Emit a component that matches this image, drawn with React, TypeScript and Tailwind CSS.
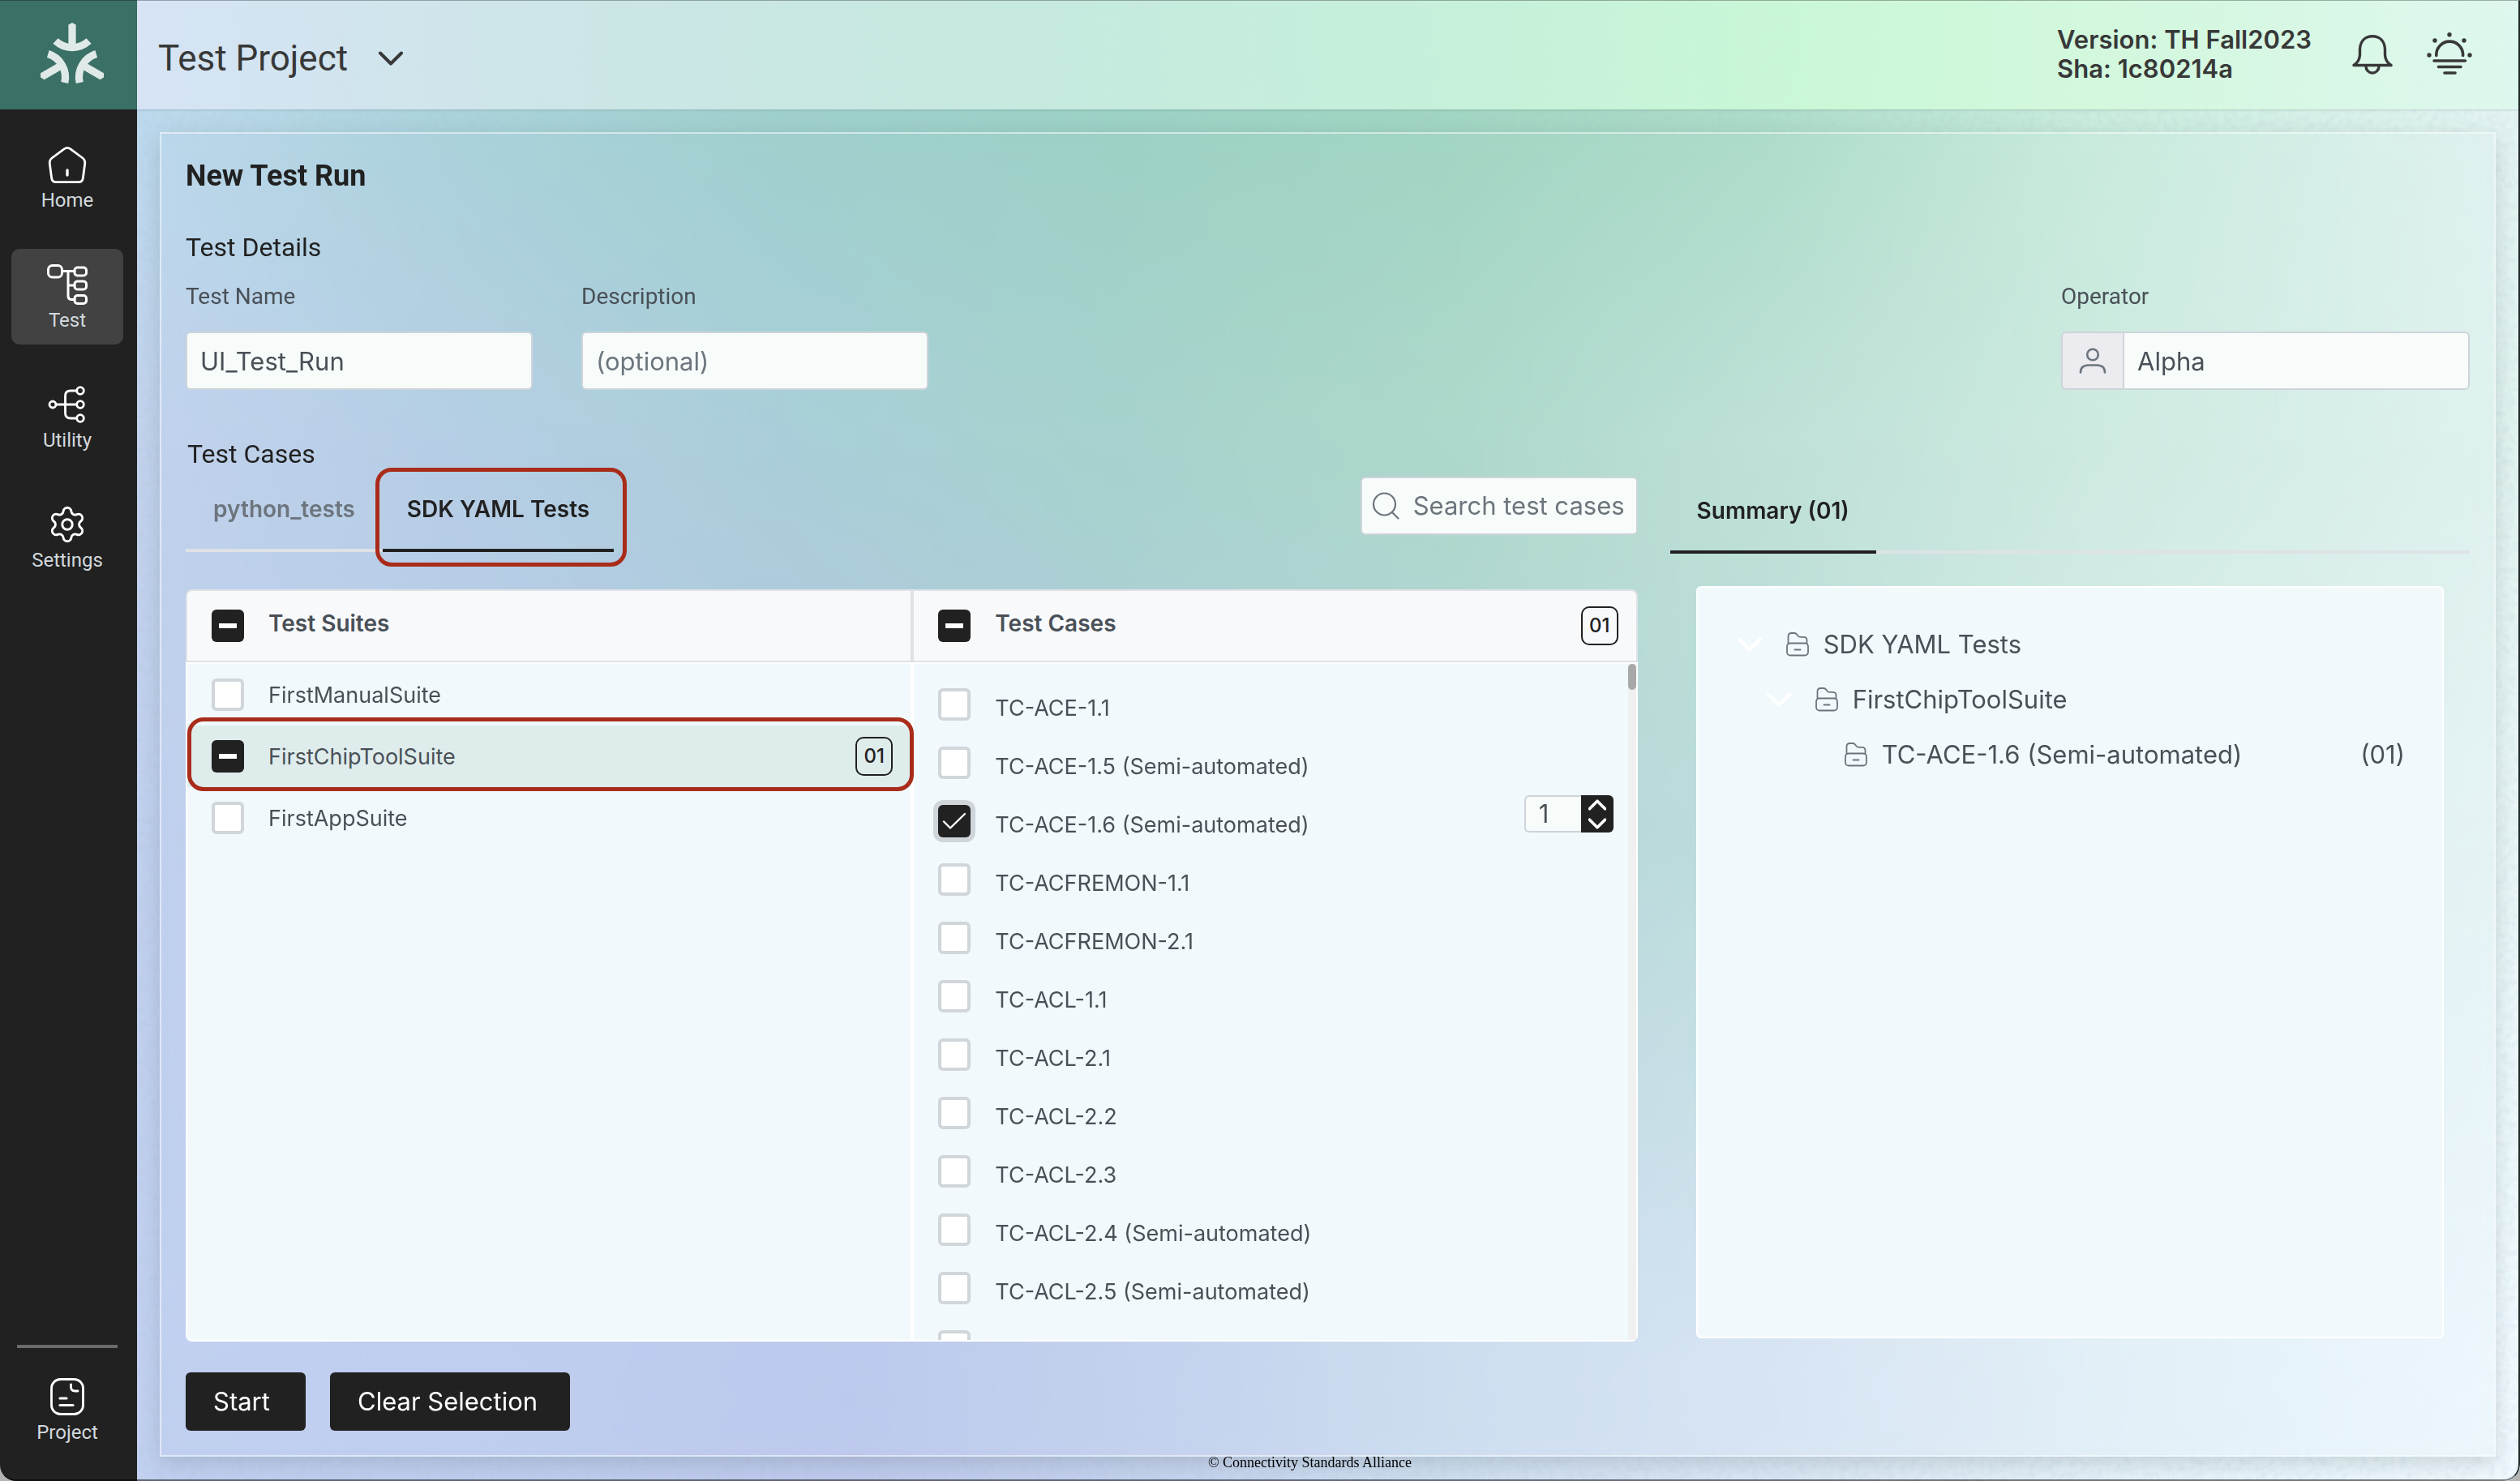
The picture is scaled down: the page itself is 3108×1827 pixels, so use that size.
import type { ReactNode } from "react";
import { Settings } from "lucide-react";

/* ---------- background ---------- */

// One horizontal colour ramp per height; each fades into the one below it.
const ramps = [
  "bg-[linear-gradient(to_right,#bcdbee_0%,#a9d4da_13%,#9dd1cb_27%,#9ad2c4_41%,#9fd6c1_55%,#aadcc6_68%,#c8eddc_82%,#e4f4f4_100%)]",
  "bg-[linear-gradient(to_right,#c3d3ee_0%,#b6cfe6_13%,#aacfda_27%,#a7d3cd_41%,#aed9cb_55%,#bfe2d8_68%,#cfece1_82%,#e2f4f1_100%)] [mask-image:linear-gradient(to_bottom,transparent_4%,black_30%)]",
  "bg-[linear-gradient(to_right,#c1d1ef_0%,#bccdea_13%,#b4c8e2_27%,#b2cfdd_41%,#b4d6d8_55%,#bddfdc_68%,#d8eeec_82%,#e9f6f7_100%)] [mask-image:linear-gradient(to_bottom,transparent_30%,black_55%)]",
  "bg-[linear-gradient(to_right,#c2d1f1_0%,#c0cef0_13%,#becaee_30%,#c6d4ef_44%,#cfdff1_55%,#d9e6f5_68%,#e4f1f9_82%,#f0faff_100%)] [mask-image:linear-gradient(to_bottom,transparent_55%,black_92%)]",
];

function Backdrop() {
  return (
    <div aria-hidden="true" className="pointer-events-none absolute inset-0">
      {ramps.map((ramp) => (
        <div key={ramp} className={`absolute inset-0 ${ramp}`} />
      ))}
      <svg className="absolute inset-0 h-full w-full opacity-20">
        <filter id="grain">
          <feTurbulence type="fractalNoise" baseFrequency="0.12" numOctaves="3" />
          <feColorMatrix values="0 0 0 0 0.4  0 0 0 0 0.5  0 0 0 0 0.6  1.6 0 0 0 -0.6" />
        </filter>
        <rect width="100%" height="100%" filter="url(#grain)" />
      </svg>
    </div>
  );
}

/* ---------- icons ---------- */

const line = {
  fill: "none",
  stroke: "currentColor",
  strokeLinecap: "round" as const,
  strokeLinejoin: "round" as const,
  "aria-hidden": true,
};

function LogoArm({ angle }: { angle: number }) {
  return (
    <g transform={`rotate(${angle} 40 45)`}>
      <path d="M35.4 2.6L40 0l4.600 2.600V30h-9.200z" fill="currentColor" />
      <path d="M19.500 22.500A30 30 0 0 0 60.500 22.500" fill="none" stroke="currentColor" strokeWidth="9.200" />
    </g>
  );
}

function Logo() {
  return (
    <svg viewBox="0 0 80 80" className="size-20 text-[#dfe9e8]" role="img" aria-label="Matter">
      <LogoArm angle={0} />
      <LogoArm angle={120} />
      <LogoArm angle={240} />
    </svg>
  );
}

function HomeIcon() {
  return (
    <svg {...line} viewBox="0 0 50 50" className="size-[50px]" strokeWidth="2.8">
      <path d="M21 5.800Q25 3 29 5.800L44 17Q47.200 19.500 46.700 24L44.300 42Q43.600 46.600 39 46.600H11Q6.400 46.600 5.700 42L3.300 24Q2.800 19.500 6 17Z" />
      <path d="M25 32v6" strokeWidth="3.400" />
    </svg>
  );
}

function TestIcon() {
  return (
    <svg {...line} viewBox="0 0 50 50" className="size-[50px]" strokeWidth="3">
      <rect x="1.500" y="1.500" width="17" height="14.500" rx="5" />
      <rect x="34" y="4" width="14.500" height="10" rx="3.500" />
      <rect x="34" y="21" width="14.500" height="10" rx="3.500" />
      <rect x="34" y="38.500" width="14.500" height="10" rx="3.500" />
      <path d="M19 8.500H34M26 8.500V39q0 4.500 4.500 4.500H34M26 26H34" />
    </svg>
  );
}

function UtilityIcon() {
  return (
    <svg {...line} viewBox="0 0 50 50" className="size-[50px]" strokeWidth="2.800">
      <circle cx="7" cy="25" r="4" />
      <circle cx="41" cy="8" r="4.300" />
      <circle cx="41" cy="25" r="4.300" />
      <circle cx="41" cy="42" r="4.300" />
      <path d="M11 25H36.500M36.500 8H29q-6.500 0-6.500 6.500v21q0 6.500 6.500 6.500h7.500" />
    </svg>
  );
}

function ProjectIcon() {
  return (
    <svg {...line} viewBox="0 0 50 50" className="size-[50px]" strokeWidth="2.800">
      <rect x="5.500" y="3.500" width="39" height="43" rx="11" />
      <path d="M29.500 10v3q0 5 5 5h3.500" />
      <path d="M16 27h8M16 35.500h16" strokeWidth="3.200" />
    </svg>
  );
}

function BellIcon() {
  return (
    <svg {...line} viewBox="0 0 50 50" className="size-[50px]" strokeWidth="3.400">
      <path d="M2 38.500Q9 34 9.500 26V19C10 8.500 16 2.800 25 2.800S40 8.500 40.500 19v7Q41 34 48 38.500Z" />
      <path d="M17 40a8 8 0 0 0 16 0" />
    </svg>
  );
}

function SunIcon() {
  const dots = [[3, 29], [10, 11], [28, 3.700], [46, 11], [53, 29]];
  return (
    <svg {...line} viewBox="0 0 56 56" className="size-14" strokeWidth="3.600">
      {dots.map(([x, y]) => (
        <circle key={x} cx={x} cy={y} r="2.700" fill="currentColor" stroke="none" />
      ))}
      <path d="M11.800 29.500V28.500a16.400 16.400 0 0 1 32.800 0V29.500" />
      <path d="M9 36H47.500M14.500 43.500H42M22 51H35" />
    </svg>
  );
}

function Chevron({ className }: { className: string }) {
  return (
    <svg {...line} viewBox="0 0 30 18" className={className}>
      <path d="M2 2.500L15 15.500 28 2.500" />
    </svg>
  );
}

function FolderIcon() {
  return (
    <svg {...line} viewBox="0 0 28 30" className="h-[30px] w-7 shrink-0 text-[#6c757d]" strokeWidth="1.800">
      <rect x="1" y="13.500" width="26" height="15" rx="4" />
      <path d="M2.500 13.500V5q0-4 4-4h3.500q2 0 3.500 2l1 1.500q1 1.300 3 1.300h4q4 0 4 4v3.700" />
      <path d="M10.500 21.500h7" />
    </svg>
  );
}

function UserIcon() {
  return (
    <svg {...line} viewBox="0 0 34 34" className="size-[34px] text-[#6c757d]" strokeWidth="2.600">
      <circle cx="17" cy="9.500" r="6.800" />
      <path d="M2 31.500q0-9 10-9h10q10 0 10 9" />
    </svg>
  );
}

function SearchIcon() {
  return (
    <svg {...line} viewBox="0 0 34 34" className="size-[34px] shrink-0 text-[#6c757d]" strokeWidth="2.200">
      <circle cx="15.500" cy="15" r="13.500" />
      <path d="M25 25l7.500 7.500" />
    </svg>
  );
}

/* ---------- controls ---------- */

type Tick = "off" | "on" | "mixed";

function TickBox({ id, state, focused, label }: { id: string; state: Tick; focused?: boolean; label?: string }) {
  const filled = state !== "off";
  return (
    <span className="grid size-10 shrink-0 place-items-center">
      <input
        id={id}
        type="checkbox"
        aria-label={label}
        defaultChecked={filled}
        className={`col-start-1 row-start-1 size-10 appearance-none rounded-md ${
          filled ? "bg-[#212121]" : "border-4 border-[#d0d6d9] bg-white"
        } ${focused ? "ring-[6px] ring-[#cfd5d9]" : ""}`}
      />
      {state === "mixed" && (
        <span className="pointer-events-none col-start-1 row-start-1 h-[6px] w-[22px] bg-white" />
      )}
      {state === "on" && (
        <svg
          {...line}
          viewBox="0 0 30 22"
          strokeWidth="2.400"
          className="pointer-events-none col-start-1 row-start-1 h-[22px] w-[30px] text-white"
        >
          <path d="M2 11.500l8 8L28 2" />
        </svg>
      )}
    </span>
  );
}

function CountBadge({ children }: { children: ReactNode }) {
  return (
    <span className="ml-auto grid h-12 w-[46px] shrink-0 place-items-center rounded-[10px] border-2 border-[#212121] text-2xl font-medium text-[#212121]">
      {children}
    </span>
  );
}

const field =
  "h-[72px] rounded-md border-2 border-[#ced4da] bg-[#f7fbfa] px-4 text-[31px] text-[#495057] placeholder:text-[#6c757d]";

function NavItem({ label, active, children }: { label: string; active?: boolean; children: ReactNode }) {
  return (
    <a
      href={`#${label.toLowerCase()}`}
      aria-current={active ? "page" : undefined}
      className={`flex h-[118px] w-[138px] flex-col items-center rounded-[10px] pt-[19px] text-white ${
        active ? "bg-[#424242]" : ""
      }`}
    >
      {children}
      <span className="mt-[5px] font-[Roboto,sans-serif] text-2xl leading-7 text-[#d3d9dd]">{label}</span>
    </a>
  );
}

/* ---------- data ---------- */

const suites: { name: string; state: Tick; count?: string }[] = [
  { name: "FirstManualSuite", state: "off" },
  { name: "FirstChipToolSuite", state: "mixed", count: "01" },
  { name: "FirstAppSuite", state: "off" },
];

const cases = [
  "TC-ACE-1.1",
  "TC-ACE-1.5 (Semi-automated)",
  "TC-ACE-1.6 (Semi-automated)",
  "TC-ACFREMON-1.1",
  "TC-ACFREMON-2.1",
  "TC-ACL-1.1",
  "TC-ACL-2.1",
  "TC-ACL-2.2",
  "TC-ACL-2.3",
  "TC-ACL-2.4 (Semi-automated)",
  "TC-ACL-2.5 (Semi-automated)",
];
const selectedCase = "TC-ACE-1.6 (Semi-automated)";

/* ---------- sections ---------- */

function Sidebar() {
  return (
    <aside className="flex w-[169px] shrink-0 flex-col bg-[#212121]">
      <div className="flex h-[135px] shrink-0 items-start bg-[#3a7066] pt-7 pl-[49px]">
        <Logo />
      </div>
      <nav aria-label="Main" className="flex flex-1 flex-col gap-[30px] pt-6 pb-[30px] pl-3.5">
        <NavItem label="Home"><HomeIcon /></NavItem>
        <NavItem label="Test" active><TestIcon /></NavItem>
        <NavItem label="Utility"><UtilityIcon /></NavItem>
        <NavItem label="Settings"><Settings size={50} strokeWidth={1.4} aria-hidden="true" /></NavItem>
        <div className="mt-auto flex flex-col gap-4">
          <hr className="ml-[7px] w-[124px] border-t-4 border-[#6b6b6b]" />
          <NavItem label="Project"><ProjectIcon /></NavItem>
        </div>
      </nav>
    </aside>
  );
}

function TopBar() {
  return (
    <header className="relative flex h-[135px] shrink-0 items-center bg-[linear-gradient(to_right,#d9e5f6e6_0%,#d0e8e8e6_20%,#caece2e6_38%,#caf3dde6_55%,#cdfad8e6_70%,#d5f9dfe6_85%,#def8eee6_100%)] pr-[59px] pb-0.5 pl-[26px] text-[#383838] shadow-sm">
      <button type="button" className="flex items-center gap-[38px] pt-2.5 font-[Roboto,sans-serif] text-[44px] leading-[52px]">
        Test Project
        <Chevron className="h-[18px] w-[30px] stroke-[4px]" />
      </button>
      <p className="ml-auto text-[31px] leading-9 font-semibold">
        Version: TH Fall2023
        <br />
        Sha: 1c80214a
      </p>
      <button type="button" aria-label="Notifications" className="ml-[50px]"><BellIcon /></button>
      <button type="button" aria-label="Theme" className="ml-[42px]"><SunIcon /></button>
    </header>
  );
}

function Details() {
  return (
    <section className="font-[Roboto,sans-serif]">
      <h2 className="mt-12 text-[32px] leading-[38px] text-[#212121]">Test Details</h2>
      <div className="mt-[26px] flex gap-[60px] text-[28px] leading-8 text-[#495057]">
        <div className="flex flex-col gap-[27px]">
          <label htmlFor="test-name">Test Name</label>
          <input id="test-name" defaultValue="UI_Test_Run" className={`w-[428px] font-[Inter,sans-serif] ${field}`} />
        </div>
        <div className="flex flex-col gap-[27px]">
          <label htmlFor="description">Description</label>
          <input id="description" placeholder="(optional)" className={`w-[428px] font-[Inter,sans-serif] ${field}`} />
        </div>
        <div className="ml-auto flex flex-col gap-[27px]">
          <label htmlFor="operator">Operator</label>
          <div className="flex">
            <span className="grid w-[76px] place-items-center rounded-l-md border-2 border-r-0 border-[#ced4da] bg-[#ebebf0]">
              <UserIcon />
            </span>
            <input
              id="operator"
              defaultValue="Alpha"
              className={`w-[428px] rounded-l-none font-[Inter,sans-serif] ${field}`}
            />
          </div>
        </div>
      </div>
    </section>
  );
}

function SuitePicker() {
  return (
    <div className="flex min-h-0 flex-col">
      <div className="flex h-[93px] shrink-0 items-start">
        <div role="tablist" aria-label="Test collections" className="flex text-[28px] leading-[34px] font-semibold">
          <button
            type="button"
            role="tab"
            aria-selected="false"
            className="w-[243px] border-b-4 border-[#dee2e6] pt-[23px] pb-8 text-[#6c757d]"
          >
            python_tests
          </button>
          <button
            type="button"
            role="tab"
            aria-selected="true"
            className="relative w-[285px] border-b-4 border-[#212121] pt-[23px] pb-8 text-[#212121]"
          >
            SDK YAML Tests
            <span className="pointer-events-none absolute -top-[11px] -right-4 -bottom-[22px] -left-[9px] rounded-[20px] border-5 border-[#a92c1a]" />
          </button>
        </div>
        <label className="ml-auto flex h-[72px] w-[342px] items-center gap-[17px] rounded-md border-2 border-[#ced4da] bg-[#f7fbfa] pl-3">
          <SearchIcon />
          <input
            type="text"
            aria-label="Search test cases"
            placeholder="Search test cases"
            className="w-full min-w-0 bg-transparent text-[31px] placeholder:text-[#6c757d]"
          />
        </label>
      </div>

      <div className="mt-[46px] flex min-h-0 flex-1 flex-col text-[#495057]">
        <div className="grid h-[90px] shrink-0 grid-cols-[896fr_890fr] rounded-t-[8px] border-2 border-[#dee2e6] bg-[#f8f9fb] text-[28px] leading-[34px] font-semibold">
          <div className="flex items-start gap-[30px] border-r-4 border-[#dee2e6] pt-[23px] pl-[30px]">
            <TickBox id="all-suites" state="mixed" />
            <label htmlFor="all-suites">Test Suites</label>
          </div>
          <div className="flex items-start gap-[30px] pt-[23px] pr-[22px] pl-[30px]">
            <TickBox id="all-cases" state="mixed" />
            <label htmlFor="all-cases">Test Cases</label>
            <span className="-mt-1 ml-auto"><CountBadge>01</CountBadge></span>
          </div>
        </div>

        <div className="grid min-h-0 flex-1 grid-cols-[896fr_890fr] grid-rows-[minmax(0,1fr)] rounded-b-[8px] border-2 border-white bg-[#f1f9fc] text-[27px] leading-[34px]">
          <ul className="border-r-4 border-white">
            {suites.map((suite) => (
              <li
                key={suite.name}
                className={`relative flex h-[76px] items-center gap-[30px] pr-[22px] pl-[30px] ${
                  suite.count ? "bg-[#dfecec]" : ""
                }`}
              >
                <TickBox id={suite.name} state={suite.state} />
                <label htmlFor={suite.name} className="pt-0.5">{suite.name}</label>
                {suite.count && <CountBadge>{suite.count}</CountBadge>}
                {suite.count && (
                  <span className="pointer-events-none absolute -top-[10px] right-[-4px] -bottom-[5px] left-0 rounded-[20px] border-5 border-[#a92c1a]" />
                )}
              </li>
            ))}
          </ul>
          <div className="flex min-h-0">
            <ul className="flex flex-1 flex-col gap-8 overflow-y-auto pt-[30px] pr-[18px] pl-[30px] [scrollbar-width:none]">
              {cases.map((name) => (
                <li key={name} className="flex h-10 shrink-0 items-end gap-[30px]">
                  <TickBox id={name} state={name === selectedCase ? "on" : "off"} focused={name === selectedCase} />
                  <label htmlFor={name} className="-mb-0.5">{name}</label>
                  {name === selectedCase && (
                    <div className="-mt-3 ml-auto flex h-[46px] self-start">
                      <input
                        aria-label="Repetitions"
                        defaultValue="1"
                        className="w-[70px] rounded-l-md border-2 border-r-0 border-[#ced4da] bg-[#f7fbfa] pl-4 text-[31px]"
                      />
                      <div className="flex w-10 flex-col rounded-r-md bg-[#212121] text-white">
                        <button type="button" aria-label="Increase" className="grid flex-1 place-items-center">
                          <Chevron className="h-[14px] w-[22px] rotate-180 stroke-[5px]" />
                        </button>
                        <button type="button" aria-label="Decrease" className="grid flex-1 place-items-center">
                          <Chevron className="h-[14px] w-[22px] stroke-[5px]" />
                        </button>
                      </div>
                    </div>
                  )}
                </li>
              ))}
              <li className="flex h-10 shrink-0">
                <TickBox id="next-case" state="off" label="Next test case" />
              </li>
            </ul>
            <div aria-hidden="true" className="w-2.5 bg-[#f0f0f0]">
              <div className="h-8 rounded-full bg-[#a8a8a8]" />
            </div>
          </div>
        </div>
      </div>
    </div>
  );
}

function Summary() {
  return (
    <div className="flex min-h-0 flex-col text-[#495057]">
      <div role="tablist" aria-label="Selection" className="flex">
        <button
          type="button"
          role="tab"
          aria-selected="true"
          className="w-[254px] border-b-4 border-[#212121] pt-[25px] pb-8 text-[28px] leading-[34px] font-semibold text-[#212121]"
        >
          Summary (01)
        </button>
        <div className="flex-1 border-b-4 border-[#dee2e6]" />
      </div>
      <ul className="mx-8 mt-10 mb-1 flex-1 rounded-md border-2 border-white bg-[#f1f9fc] pt-9 pr-[46px] text-[31px]">
        <li className="flex h-[68px] items-center pl-[49px]">
          <Chevron className="mr-[30px] h-[18px] w-[30px] stroke-[4px] text-white" />
          <FolderIcon />
          <span className="ml-[18px]">SDK YAML Tests</span>
        </li>
        <li className="flex h-[68px] items-center pl-[85px]">
          <Chevron className="mr-[30px] h-[18px] w-[30px] stroke-[4px] text-white" />
          <FolderIcon />
          <span className="ml-[18px]">FirstChipToolSuite</span>
        </li>
        <li className="flex h-[68px] items-center pl-[181px]">
          <FolderIcon />
          <span className="ml-[18px]">{selectedCase}</span>
          <span className="ml-auto">(01)</span>
        </li>
      </ul>
    </div>
  );
}

export default function App() {
  return (
    <div className="h-screen bg-[#b4b4b4] font-[Inter,sans-serif]">
      <div className="relative flex h-full overflow-hidden rounded-b-[20px]">
        <Sidebar />
        <div className="relative flex min-w-0 flex-1 flex-col">
          <Backdrop />
          <TopBar />
          <main className="relative mt-7 mr-[30px] ml-7 flex min-h-0 flex-1 flex-col border-2 border-white/50 px-[30px] pt-[31px] pb-[30px] shadow-[0_8px_24px_rgba(60,80,80,0.2)] backdrop-blur-[10px]">
            <h1 className="font-[Roboto,sans-serif] text-[36px] leading-[42px] font-bold text-[#212121]">New Test Run</h1>
            <Details />
            <h2 className="mt-[60px] pl-0.5 font-[Roboto,sans-serif] text-[32px] leading-[38px] text-[#212121]">Test Cases</h2>
            <div className="mt-[9px] grid min-h-0 flex-1 grid-cols-[1790fr_986fr] grid-rows-[minmax(0,1fr)] gap-10">
              <SuitePicker />
              <Summary />
            </div>
            <div className="mt-[38px] flex shrink-0 gap-[30px] text-[31px] text-white">
              <button type="button" className="h-[72px] w-[148px] rounded-md bg-[#212121] pl-[34px] text-left">Start</button>
              <button type="button" className="h-[72px] w-[296px] rounded-md bg-[#212121] pl-[34px] text-left">Clear Selection</button>
            </div>
          </main>
          <footer className="relative h-[30px] shrink-0 pr-[46px] text-center font-['Liberation_Serif',serif] text-lg leading-[14px] text-black">
            © Connectivity Standards Alliance
          </footer>
        </div>
        <div className="pointer-events-none absolute inset-0 rounded-b-[20px] border-t border-r-2 border-b-2 border-t-black/30 border-r-[#1f2a28] border-b-black/50" />
      </div>
    </div>
  );
}
